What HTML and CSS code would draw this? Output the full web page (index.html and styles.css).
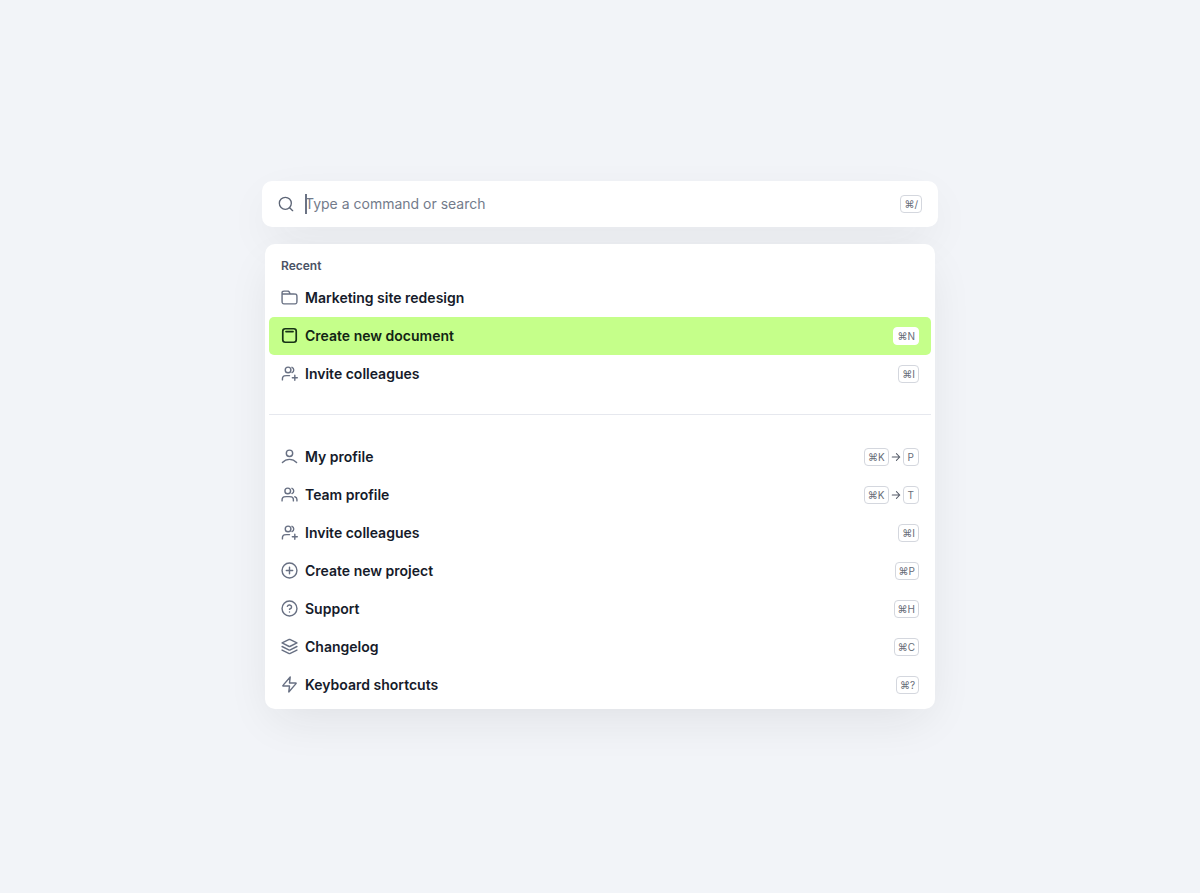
FILE: index.html
```html
<!DOCTYPE html>
<html lang="en">
<head>
<meta charset="utf-8">
<meta name="viewport" content="width=device-width, initial-scale=1">
<title>Command menu</title>
<link rel="stylesheet" href="styles.css">
</head>
<body>
<svg class="sprite" aria-hidden="true">
  <symbol id="folder" viewBox="0 0 24 24"><path d="m13 7-1.100-2.200c-.3-.7-.5-1-.8-1.300a2 2 0 0 0-.7-.4C10 3 9.600 3 8.900 3H4.700c-1.100 0-1.700 0-2.100.2a2 2 0 0 0-.9.900C1.500 4.500 1.500 5.100 1.500 6.200V7m0 0h16.200c1.700 0 2.500 0 3.200.3.500.3 1 .8 1.300 1.300.3.700.3 1.500.3 3.200v4.400c0 1.700 0 2.500-.3 3.200-.3.500-.8 1-1.300 1.300-.7.300-1.500.3-3.200.3H6.300c-1.700 0-2.500 0-3.200-.3-.5-.3-1-.8-1.300-1.300-.3-.7-.3-1.500-.3-3.200Z"/></symbol>
  <symbol id="document" viewBox="0 0 24 24"><rect x="2.500" y="2.500" width="19" height="19" rx="3.500"/><path d="M7 6.500h10"/></symbol>
  <symbol id="invite" viewBox="0 0 24 24"><path d="M19.500 14.500v7M16 18h7M12 15H8c-1.900 0-2.800 0-3.500.3a4 4 0 0 0-2.200 2.200C2 18.200 2 19.100 2 21M15.500 3.300a4 4 0 0 1 0 7.400"/><circle cx="10" cy="7" r="4"/></symbol>
  <symbol id="user" viewBox="0 0 24 24"><path d="M2 20.500c2.600-2.800 6-4.500 10-4.500s7.400 1.700 10 4.500"/><circle cx="12" cy="7.500" r="4.500"/></symbol>
  <symbol id="team" viewBox="0 0 24 24"><path d="M22.500 21v-2a4 4 0 0 0-3-3.900M15.500 3.300a4 4 0 0 1 0 7.400M17.500 21c0-1.900 0-2.800-.3-3.500a4 4 0 0 0-2.200-2.200c-.7-.3-1.600-.3-3.500-.3H7.500c-1.900 0-2.800 0-3.500.3a4 4 0 0 0-2.200 2.200c-.3.700-.3 1.600-.3 3.500"/><circle cx="9.500" cy="7" r="4"/></symbol>
  <symbol id="plus" viewBox="0 0 24 24"><circle cx="12" cy="12" r="10.500"/><path d="M12 7.500v9M7.500 12h9"/></symbol>
  <symbol id="help" viewBox="0 0 24 24"><circle cx="12" cy="12" r="10.500"/><path d="M9 9a3.100 3.100 0 0 1 6 1c0 2-3 3-3 3m0 4h.01"/></symbol>
  <symbol id="layers" viewBox="0 0 24 24"><path d="m1.500 12 10.100 5q.4.200.8 0l10.100-5M1.500 17l10.100 5q.4.200.8 0l10.100-5M1.500 7l10.100-5q.4-.2.800 0l10.100 5-10.100 5q-.4.200-.8 0Z"/></symbol>
  <symbol id="bolt" viewBox="0 0 24 24"><path d="M13 1.500 3.100 12.900c-.4.400-.5.600-.5.800q0 .2.200.4c.1.100.4.100.9.100H12l-1 8.300 9.900-11.400c.4-.4.500-.6.500-.8q0-.2-.2-.4c-.1-.1-.4-.1-.9-.1H12Z"/></symbol>
  <symbol id="arrow" viewBox="0 0 24 24"><path d="M3 12h18m-8-8 8 8-8 8"/></symbol>
</svg>
<main class="palette">
  <form class="search" role="search">
    <svg class="search-icon" viewBox="0 0 24 24" aria-hidden="true"><circle cx="11" cy="11" r="9"/><path d="m22 22-4.500-4.500"/></svg>
    <div class="field">
      <input class="search-input" type="text" aria-label="Type a command or search" placeholder="Type a command or search">
      <span class="caret"></span>
    </div>
    <kbd class="key">⌘/</kbd>
  </form>
  <div class="panel">
    <section class="group">
      <h2 class="heading">Recent</h2>
      <button class="item" type="button"><svg class="icon"><use href="#folder"/></svg><span class="label">Marketing site redesign</span></button>
      <button class="item active" type="button"><svg class="icon"><use href="#document"/></svg><span class="label">Create new document</span><kbd class="key">⌘N</kbd></button>
      <button class="item" type="button"><svg class="icon"><use href="#invite"/></svg><span class="label">Invite colleagues</span><kbd class="key">⌘I</kbd></button>
    </section>
    <hr class="divider">
    <section class="group">
      <button class="item" type="button"><svg class="icon"><use href="#user"/></svg><span class="label">My profile</span><span class="keys"><kbd class="key">⌘K</kbd><svg class="arrow"><use href="#arrow"/></svg><kbd class="key">P</kbd></span></button>
      <button class="item" type="button"><svg class="icon"><use href="#team"/></svg><span class="label">Team profile</span><span class="keys"><kbd class="key">⌘K</kbd><svg class="arrow"><use href="#arrow"/></svg><kbd class="key">T</kbd></span></button>
      <button class="item" type="button"><svg class="icon"><use href="#invite"/></svg><span class="label">Invite colleagues</span><kbd class="key">⌘I</kbd></button>
      <button class="item" type="button"><svg class="icon"><use href="#plus"/></svg><span class="label">Create new project</span><kbd class="key">⌘P</kbd></button>
      <button class="item" type="button"><svg class="icon"><use href="#help"/></svg><span class="label">Support</span><kbd class="key">⌘H</kbd></button>
      <button class="item" type="button"><svg class="icon"><use href="#layers"/></svg><span class="label">Changelog</span><kbd class="key">⌘C</kbd></button>
      <button class="item" type="button"><svg class="icon"><use href="#bolt"/></svg><span class="label">Keyboard shortcuts</span><kbd class="key">⌘?</kbd></button>
    </section>
  </div>
</main>
</body>
</html>
```
FILE: styles.css
```css
* {
  box-sizing: border-box;
}

body {
  margin: 0;
  min-height: 100vh;
  padding: 16px 16px 20px;
  display: flex;
  align-items: center;
  justify-content: center;
  background: #f2f4f8;
  color: #161b2a;
  font-family: Inter, "Liberation Sans", sans-serif;
}

.sprite {
  position: absolute;
  width: 0;
  height: 0;
}

svg {
  fill: none;
  stroke: currentColor;
  stroke-width: 2;
  stroke-linecap: round;
  stroke-linejoin: round;
}

.palette {
  width: 100%;
  max-width: 676px;
  display: flex;
  flex-direction: column;
  gap: 17px;
}

.search,
.panel {
  background: #fff;
  box-shadow: 0 16px 48px -8px rgba(30, 30, 36, 0.09);
}

.search {
  display: flex;
  align-items: center;
  gap: 11px;
  height: 46px;
  padding: 0 16px;
  border-radius: 10px;
}

.search-icon {
  width: 16px;
  height: 16px;
  flex: none;
  color: #5d6576;
}

.field {
  position: relative;
  flex: 1;
}

.search-input {
  display: block;
  width: 100%;
  height: 24px;
  padding: 0;
  border: 0;
  outline: 0;
  background: none;
  color: #161b2a;
  font: 400 14px/24px Inter, "Liberation Sans", sans-serif;
}

.search-input::placeholder {
  color: #737b8b;
  opacity: 1;
}

.caret {
  position: absolute;
  top: 2px;
  left: 0;
  width: 2px;
  height: 20px;
  background: #6b7384;
}

.panel {
  margin: 0 3px;
  padding: 4px 4px 5px;
  border-radius: 10px;
}

.heading {
  margin: 0;
  padding: 8px 12px 3px;
  color: #4a5265;
  font-size: 12px;
  font-weight: 600;
  line-height: 20px;
}

.item {
  display: flex;
  align-items: center;
  gap: 7px;
  width: 100%;
  height: 38px;
  padding: 0 12px;
  border: 0;
  border-radius: 5px;
  background: none;
  color: inherit;
  font: 600 14px/24px Inter, "Liberation Sans", sans-serif;
  text-align: left;
}

.active {
  background: #c5ff8a;
  color: #122414;
}

.icon {
  width: 17px;
  height: 17px;
  flex: none;
  color: #687083;
}

.active .icon {
  color: #173316;
  stroke-width: 2.4;
}

.label {
  flex: 1;
}

.keys {
  display: flex;
  align-items: center;
  gap: 2px;
}

.key {
  height: 18px;
  padding: 0 3px;
  border: 1px solid #d4d7de;
  border-radius: 4px;
  background: #fff;
  color: #686d78;
  font: 400 10px/16px Inter, "Liberation Sans", sans-serif;
}

.keys .key:last-child {
  padding: 0 4px;
}

.active .key {
  border-color: #fff;
}

.arrow {
  width: 10px;
  height: 10px;
  color: #535966;
  stroke-width: 2.5;
}

.divider {
  height: 1px;
  margin: 21px 0 23px;
  border: 0;
  background: #e6e8ee;
}
```
